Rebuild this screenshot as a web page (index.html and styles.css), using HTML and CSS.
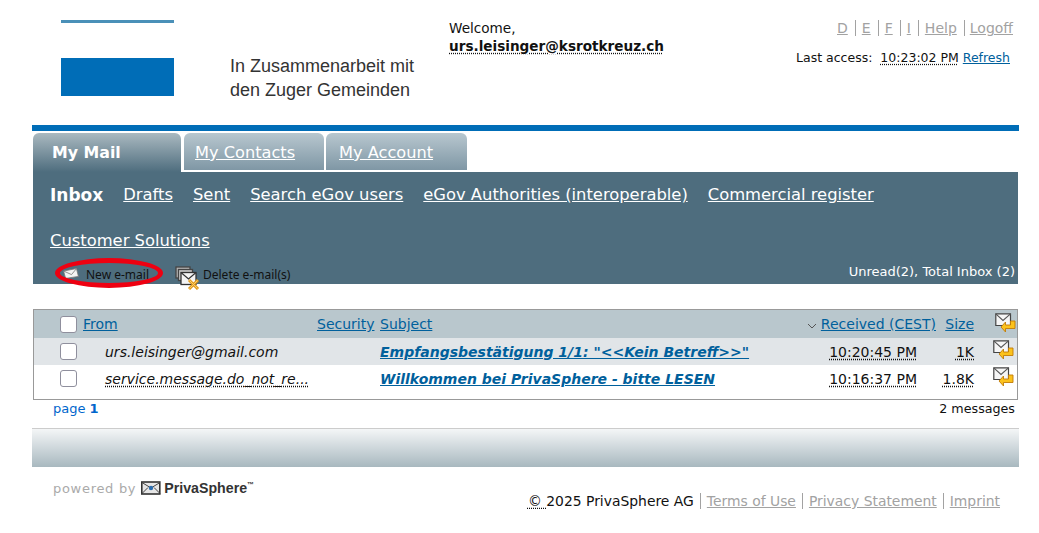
FILE: index.html
```html
<!DOCTYPE html>
<html lang="en">
<head>
  <meta charset="UTF-8">
  <title>PrivaSphere Inbox</title>
  <link rel="stylesheet" href="styles.css">
</head>
<body>
  <div class="page">
    <header class="header">
      <div class="logo">
        <div class="logo-flag">
          <div class="flag-line"></div>
          <div class="flag-block"></div>
        </div>
        <div class="logo-text">In Zusammenarbeit mit<br>den Zuger Gemeinden</div>
      </div>
      <div class="welcome">
        <div>Welcome,</div>
        <div class="welcome-user"><abbr>urs.leisinger@ksrotkreuz.ch</abbr></div>
      </div>
      <div class="header-right">
        <div class="lang-links">
          <a href="#">D</a><a href="#">E</a><a href="#">F</a><a href="#">I</a><a href="#">Help</a><a href="#">Logoff</a>
        </div>
        <div class="last-access">Last access: &nbsp;<abbr>10:23:02 PM</abbr> <a href="#">Refresh</a></div>
      </div>
    </header>

    <div class="blue-bar"></div>

    <nav class="tabs">
      <a class="tab active">My Mail</a>
      <a class="tab tab-contacts" href="#">My Contacts</a>
      <a class="tab tab-account" href="#">My Account</a>
    </nav>

    <section class="panel">
      <ul class="subnav">
        <li class="current">Inbox</li>
        <li><a href="#">Drafts</a></li>
        <li><a href="#">Sent</a></li>
        <li><a href="#">Search eGov users</a></li>
        <li><a href="#">eGov Authorities (interoperable)</a></li>
        <li><a href="#">Commercial register</a></li>
        <li><a href="#">Customer Solutions</a></li>
      </ul>
      <div class="toolbar">
        <div class="actions">
          <span class="action action-new">
            <svg class="icon-new" viewBox="0 0 16 11" width="16" height="11">
              <path d="M.6 3 13.500.6 15.400 8.400 2.600 10.400Z" fill="#f4f4f4" stroke="#777" stroke-width=".8"/>
              <path d="M.6 3 8.500 6.600 13.500.6" fill="none" stroke="#777" stroke-width=".8"/>
            </svg>
            New e-mail
          </span>
          <span class="action action-delete">
            <svg viewBox="0 0 26 24" width="26" height="24">
              <rect x="1" y="1" width="14" height="11" fill="#b5b5b5" stroke="#444" stroke-width="1.300"/>
              <rect x="3.500" y="3.500" width="14" height="11" fill="#c8c8c8" stroke="#444" stroke-width="1.300"/>
              <rect x="6" y="6.500" width="15" height="12" fill="#f4f4f4" stroke="#333" stroke-width="1.300"/>
              <path d="M6 6.500l7.500 6.500L21 6.500" fill="none" stroke="#333" stroke-width="1.200"/>
              <path d="M14 14l9 9M23 14l-9 9" stroke="#e39a1f" stroke-width="3"/>
              <path d="M14.500 14.500l8 8M22.500 14.500l-8 8" stroke="#f7cf6a"/>
            </svg>
            Delete e-mail(s)
          </span>
        </div>
        <div class="inbox-count">Unread(2), Total Inbox (2)</div>
      </div>
    </section>

    <div class="mail-box">
      <table class="mail-table">
        <thead>
          <tr>
            <th class="col-check"><span class="checkbox"></span></th>
            <th class="col-from"><a href="#">From</a></th>
            <th class="col-security"><a href="#">Security</a></th>
            <th class="col-subject"><a href="#">Subject</a></th>
            <th class="col-received">
              <svg class="sort-arrow" viewBox="0 0 10 6" width="10" height="6"><path d="M1 1l4 4 4-4" fill="none" stroke="#555"/></svg>
              <a href="#">Received (CEST)</a>
            </th>
            <th class="col-size"><a href="#">Size</a></th>
            <th class="col-reply">
              <svg class="reply-icon" viewBox="0 0 21 20" width="21" height="20"><use href="#reply"/></svg>
            </th>
          </tr>
        </thead>
        <tbody>
          <tr class="row-shaded">
            <td><span class="checkbox"></span></td>
            <td class="sender">urs.leisinger@gmail.com</td>
            <td></td>
            <td class="subject"><a href="#">Empfangsbestätigung 1/1: "&lt;&lt;Kein Betreff&gt;&gt;"</a></td>
            <td class="received"><abbr>10:20:45 PM</abbr></td>
            <td class="size"><abbr>1K</abbr></td>
            <td class="reply"><svg class="reply-icon" viewBox="0 0 21 20" width="21" height="20"><use href="#reply"/></svg></td>
          </tr>
          <tr>
            <td><span class="checkbox"></span></td>
            <td class="sender"><abbr>service.message.do_not_re...</abbr></td>
            <td></td>
            <td class="subject"><a href="#">Willkommen bei PrivaSphere - bitte LESEN</a></td>
            <td class="received"><abbr>10:16:37 PM</abbr></td>
            <td class="size"><abbr>1.8K</abbr></td>
            <td class="reply"><svg class="reply-icon" viewBox="0 0 21 20" width="21" height="20"><use href="#reply"/></svg></td>
          </tr>
        </tbody>
      </table>
    </div>

    <div class="pager">
      <span>page <b>1</b></span>
      <span class="pager-count">2 messages</span>
    </div>

    <div class="footer-band"></div>

    <footer class="footer">
      <div class="powered">
        powered by
        <svg viewBox="0 0 20 14" width="20" height="14">
          <rect x=".8" y="1" width="18" height="12" fill="#e6e6e6" stroke="#333" stroke-width="1.600"/>
          <path d="M1 1.500l9 5.500 9-5.500M1 12.500l6-6M19 12.500l-6-6" fill="none" stroke="#444"/>
          <circle cx="10" cy="7" r="2.200" fill="#2a6db0"/>
        </svg>
        <span class="powered-brand">PrivaSphere<sup>™</sup></span>
      </div>
      <div class="legal">
        <span class="legal-copy"><abbr>©&nbsp;</abbr>2025 PrivaSphere AG</span><a href="#">Terms of Use</a><a href="#">Privacy Statement</a><a href="#">Imprint</a>
      </div>
    </footer>
  </div>

  <svg class="svg-defs" width="0" height="0">
    <defs>
      <g id="reply">
        <path d="M.8.800H15.500V12.500H.8Z" fill="#f6f6f6" stroke="#444" stroke-width="1.200"/>
        <path d="M.8.800 8 7.500 15.500.8" fill="none" stroke="#555" stroke-width="1.100"/>
        <path d="M15.500 8h4.500v7.500h-9.500V19L6 14l4.500-5v3h5Z" fill="#fbc21c" stroke="#c27c08" stroke-width=".9"/>
      </g>
    </defs>
  </svg>
</body>
</html>
```

FILE: styles.css
```css
:root {
  --blue: #006db7;
  --slate: #4e6d7e;
  --link: #00609c;
  --grey-link: #a2a2a2;
}

* {
  box-sizing: border-box;
}

body {
  margin: 0;
  background-color: white;
  color: #111;
  font-family: "DejaVu Sans", Verdana, sans-serif;
  font-size: 14px;
}

abbr {
  text-decoration: underline dotted;
  text-underline-offset: 2px;
}

.page {
  width: 987px;
  margin-left: 32px;
}

/* header */

.header {
  display: flex;
  height: 125px;
}

.logo {
  display: flex;
  width: 417px;
  padding-left: 29px;
}

.logo-flag {
  width: 113px;
  padding-top: 20px;
}

.flag-line {
  height: 3px;
  background-color: #4a90b8;
}

.flag-block {
  height: 38px;
  margin-top: 35px;
  background-color: var(--blue);
}

.logo-text {
  margin: 54px 0 0 56px;
  color: #333;
  font-family: "Liberation Sans", Arial, sans-serif;
  font-size: 18px;
  line-height: 24px;
  white-space: nowrap;
}

.welcome {
  flex: 1;
  padding-top: 19px;
  font-size: 13.6px;
  line-height: 18px;
}

.welcome-user {
  font-weight: bold;
}

.header-right {
  padding: 20px 6px 0 0;
  text-align: right;
  font-size: 12.5px;
}

.lang-links a {
  padding: 0 7px 0 6px;
  border-left: 1px solid var(--grey-link);
  color: var(--grey-link);
  font-size: 14px;
}

.lang-links a:first-child {
  border-left: none;
}

.lang-links a:last-child {
  padding: 0 0 0 5px;
}

.last-access {
  margin-top: 14px;
  padding-right: 3px;
}

.last-access a {
  color: var(--link);
}

.blue-bar {
  height: 6px;
  background-color: var(--blue);
}

/* tabs */

.tabs {
  display: flex;
  height: 41px;
  padding: 2px 0 0 1px;
}

.tab {
  display: block;
  height: 37px;
  margin-right: 2px;
  padding: 10px 0 0 13px;
  border-radius: 6px 6px 0 0;
  background: linear-gradient(#b8c7cf, #7f97a5);
  color: white;
  font-size: 16.2px;
}

.tab.active {
  width: 148px;
  height: 39px;
  margin-right: 3px;
  padding-left: 19px;
  background: linear-gradient(#aab9c0, var(--slate));
  font-size: 15.8px;
  font-weight: bold;
}

.tab-contacts {
  width: 140px;
  padding-left: 11px;
}

.tab-account {
  width: 141px;
}

/* sub navigation panel */

.panel {
  width: 985px;
  height: 112px;
  margin-left: 1px;
  background-color: var(--slate);
  color: white;
}

.subnav {
  display: flex;
  flex-wrap: wrap;
  gap: 2px 20px;
  height: 88px;
  margin: 0;
  padding: 1px 0 0 17px;
  list-style: none;
  font-size: 16.35px;
  line-height: 44px;
}

.subnav a {
  color: white;
}

.subnav .current {
  font-size: 17px;
  font-weight: bold;
}

.toolbar {
  display: flex;
  justify-content: space-between;
  height: 24px;
  padding-right: 3px;
}

.actions {
  display: flex;
  padding-left: 22px;
  color: #111;
  font-family: "Noto Sans", sans-serif;
  font-size: 12px;
}

.action {
  display: flex;
  align-items: center;
  height: 24px;
  padding-top: 4px;
  white-space: nowrap;
}

.icon-new {
  margin: -2px 7px 0 8px;
}

.action-new {
  position: relative;
  width: 108px;
}

/* the hand-drawn red ring round the button */
.action-new::before {
  content: "";
  position: absolute;
  box-sizing: border-box;
  left: 0;
  top: -2px;
  width: 108px;
  height: 30px;
  border: 5px solid #ee0011;
  border-radius: 50%;
}

.action-delete {
  margin-left: 12px;
}

.action-delete svg {
  margin: 4px 2px -4px 0;
}

.inbox-count {
  padding-top: 4px;
  font-size: 13px;
}

/* mail table */

.mail-box {
  width: 985px;
  height: 91px;
  margin: 25px 0 0 1px;
  border: 1px solid #999;
}

.mail-table {
  width: 983px;
  border-collapse: collapse;
  table-layout: fixed;
}

.mail-table th {
  height: 28px;
  padding: 0;
  background-color: #b9c7cd;
  font-weight: normal;
  text-align: left;
}

.mail-table td {
  height: 27px;
  padding: 0;
}

.mail-table a {
  color: var(--link);
}

.col-check { width: 49px; }
.col-from { width: 234px; }
.col-security { width: 60px; }
.col-subject { width: 428px; }
.col-received { width: 133px; }
.col-size { width: 38px; }

.mail-table .col-received,
.mail-table .col-size {
  padding-right: 2px;
  text-align: right;
  white-space: nowrap;
}

.mail-table .col-subject,
.mail-table .subject {
  padding-left: 3px;
}

.checkbox {
  display: block;
  width: 17px;
  height: 17px;
  margin-left: 26px;
  border: 1px solid #8f8f9d;
  border-radius: 3px;
  background-color: white;
}

.row-shaded td {
  background-color: #e1e5e8;
}

.mail-table .sender {
  padding-left: 22px;
  font-style: italic;
  white-space: nowrap;
}

.subject {
  font-style: italic;
  font-weight: bold;
  white-space: nowrap;
}

.mail-table .received {
  padding-right: 21px;
  text-align: right;
}

.mail-table .size {
  padding-right: 2px;
  text-align: right;
}

.mail-table .reply {
  padding-top: 2px;
  vertical-align: top;
}

.mail-table .col-reply {
  padding: 3px 0 0 2px;
  vertical-align: top;
}

.reply-icon {
  display: block;
  margin-left: 17px;
}

.sort-arrow {
  margin-right: -1px;
}

/* pager and footer */

.pager {
  display: flex;
  justify-content: space-between;
  height: 28px;
  padding: 1px 4px 0 21px;
  color: #0066cc;
  font-size: 13px;
}

.pager-count {
  color: #111;
  font-size: 12.7px;
}

.footer-band {
  height: 39px;
  border-top: 1px solid #ccc;
  background: linear-gradient(#f4f6f7, #a8b8bf);
}

.footer {
  display: flex;
  justify-content: space-between;
  padding: 12px 19px 0 21px;
}

.powered {
  display: flex;
  align-items: center;
  gap: 3px;
  height: 18px;
  color: #aaa;
  font-size: 13px;
  letter-spacing: .7px;
}

.powered svg {
  margin-left: 2px;
}

.powered-brand {
  color: #333;
  font-family: "Liberation Sans", Arial, sans-serif;
  font-size: 14.2px;
  font-weight: bold;
  letter-spacing: 0;
}

.powered-brand sup {
  font-size: 7px;
}

.legal {
  padding-top: 14px;
  font-size: 13.9px;
}

.legal a {
  padding: 0 6px;
  border-left: 1px solid var(--grey-link);
  color: var(--grey-link);
}

.legal-copy {
  padding-right: 6px;
}

.legal a:last-child {
  padding-right: 0;
}

.svg-defs {
  position: absolute;
}
```
